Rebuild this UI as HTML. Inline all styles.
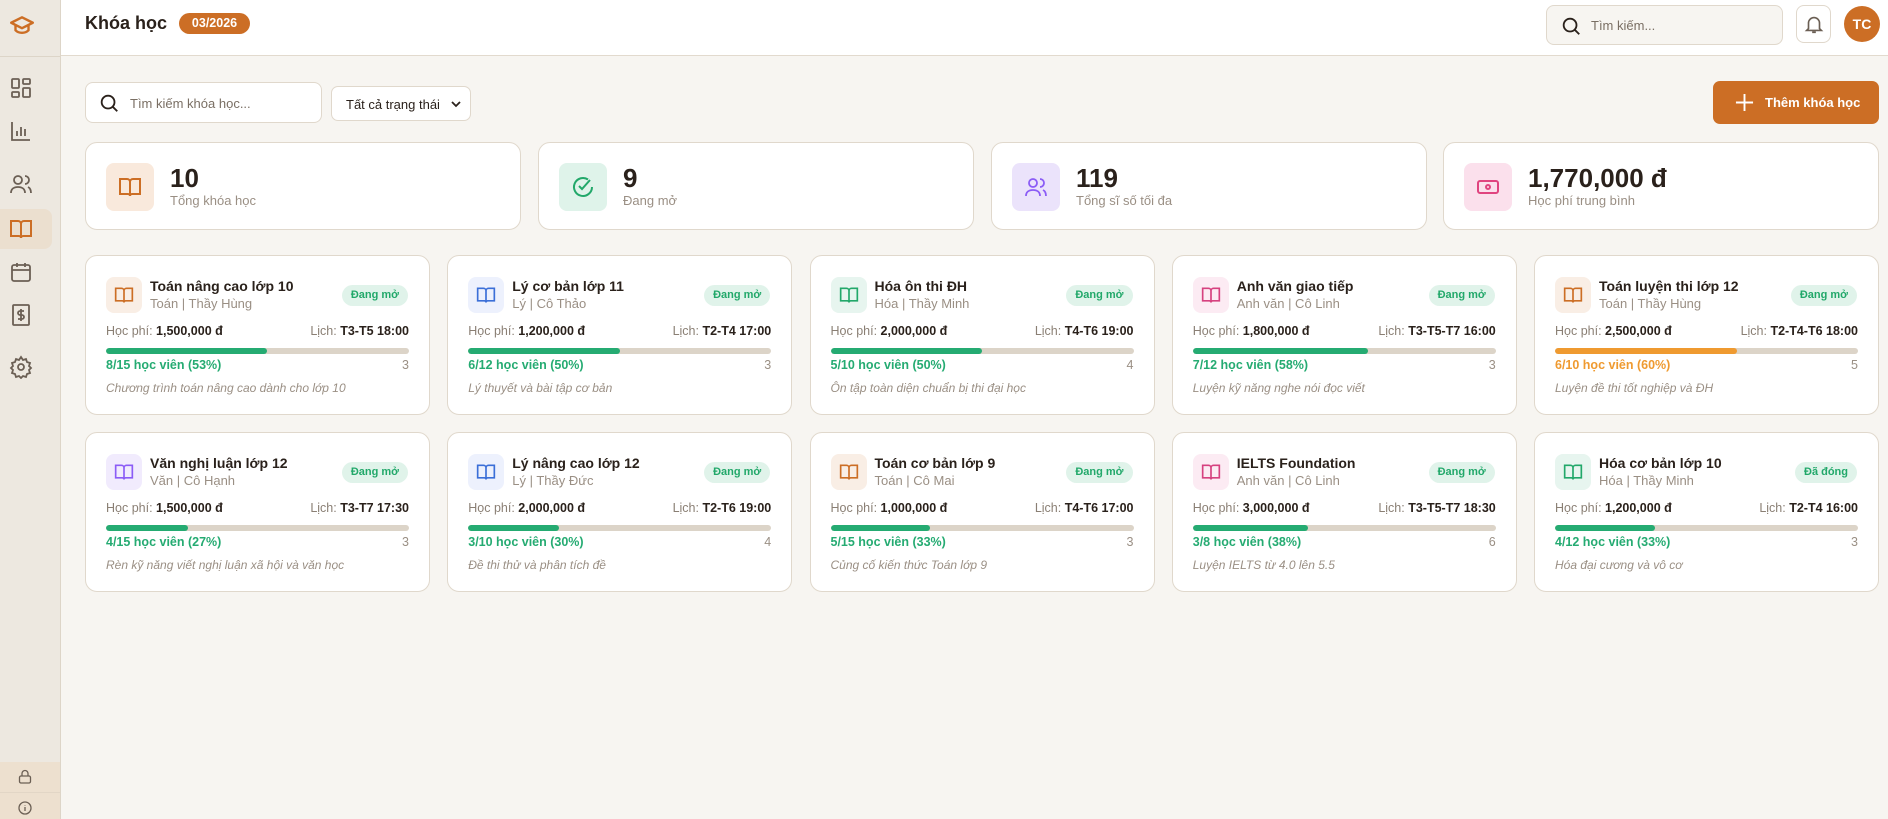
<!DOCTYPE html>
<html><head><meta charset="utf-8"><style>
*{box-sizing:border-box;margin:0;padding:0}
body{width:1888px;height:819px;overflow:hidden;background:#f7f5f1;font-family:"Liberation Sans",Arial,sans-serif;color:#2a211b;position:relative}
.sb{position:absolute;left:0;top:0;width:61px;height:819px;background:#ede8e0;border-right:1px solid #ddd5c8}
.sb .ic{position:absolute;left:9px;width:24px;height:24px}
.hd{position:absolute;left:61px;top:0;right:0;height:56px;background:#fff;border-bottom:1px solid #e2dace}
.abs{position:absolute}
.card{position:absolute;width:345px;height:160px;background:#fff;border:1px solid #e0d8cc;border-radius:12px}
.card .ib{position:absolute;left:20px;top:21px;width:36px;height:36px;border-radius:8px;display:flex;align-items:center;justify-content:center}
.card .t{position:absolute;left:64px;top:22px;font-size:14px;font-weight:bold;color:#2a211b}
.card .s{position:absolute;left:64px;top:40px;font-size:13px;color:#9a8f84}
.card .bd{position:absolute;right:21px;top:29px;height:21px;padding:0 9px;border-radius:11px;background:#e0f3ea;color:#22a86a;font-size:11px;font-weight:bold;line-height:21px}
.card .fee{position:absolute;left:20px;right:20px;top:68px;font-size:12.5px;color:#8a7f74;display:flex;justify-content:space-between}
.card .fee b{color:#2a211b}
.card .bar{position:absolute;left:20px;right:20px;top:92px;height:6px;border-radius:3px;background:#dcd4c8;overflow:hidden}
.card .bar i{display:block;height:100%;background:#25ab72;border-radius:3px}
.card .cnt{position:absolute;left:20px;right:20px;top:102px;font-size:12.5px;display:flex;justify-content:space-between;color:#9a8f84}
.card .cnt span:first-child{color:#25ab72;font-weight:bold}
.card .d{position:absolute;left:20px;top:125px;font-size:12px;font-style:italic;color:#9a8f84}
.stat{position:absolute;top:142px;width:436px;height:88px;background:#fff;border:1px solid #e0d8cc;border-radius:12px}
.stat .ib{position:absolute;left:20px;top:20px;width:48px;height:48px;border-radius:8px;display:flex;align-items:center;justify-content:center}
.stat .n{position:absolute;left:84px;top:20px;font-size:26px;font-weight:bold}
.stat .l{position:absolute;left:84px;top:50px;font-size:13px;color:#9a8f84}
</style></head><body>
<div class="sb">
<svg class="abs" style="left:7px;top:13px" width="30" height="26" viewBox="0 0 24 24" fill="none" stroke="#cc6e25" stroke-width="2.2" stroke-linejoin="round"><path d="M2 9l10-5 10 5-10 5z"/><path d="M6 11v5c3 3 9 3 12 0v-5"/></svg>
<div class="abs" style="left:0;top:56px;width:60px;height:1px;background:#ddd5c8"></div>
<svg class="ic" style="top:76px" viewBox="0 0 24 24" fill="none" stroke="#6b5f54" stroke-width="1.8"><rect x="3" y="3" width="7" height="9" rx="1"/><rect x="14" y="3" width="7" height="5" rx="1"/><rect x="14" y="12" width="7" height="9" rx="1"/><rect x="3" y="16" width="7" height="5" rx="1"/></svg>
<svg class="ic" style="top:119px" viewBox="0 0 24 24" fill="none" stroke="#6b5f54" stroke-width="1.8"><path d="M3 3v18h18M8 17v-5M12 17V8M16 17v-7"/></svg>
<svg class="ic" style="top:172px" viewBox="0 0 24 24" fill="none" stroke="#6b5f54" stroke-width="1.8"><circle cx="9" cy="8" r="4"/><path d="M2 21c0-4 3-6 7-6s7 2 7 6M16 4a4 4 0 010 8M19 15c2 1 3 3 3 6"/></svg>
<div class="abs" style="left:0;top:209px;width:52px;height:40px;background:#ebdfcf;border-radius:0 8px 8px 0"></div>
<svg class="ic" style="top:217px" viewBox="0 0 24 24" fill="none" stroke="#cc6e25" stroke-width="2"><path d="M2 4h7a3 3 0 013 3v14a2 2 0 00-2-2H2zM22 4h-7a3 3 0 00-3 3v14a2 2 0 012-2h8z"/></svg>
<svg class="ic" style="top:260px" viewBox="0 0 24 24" fill="none" stroke="#6b5f54" stroke-width="1.8"><rect x="3" y="5" width="18" height="16" rx="2"/><path d="M3 10h18M8 3v4M16 3v4"/></svg>
<svg class="ic" style="top:303px" viewBox="0 0 24 24" fill="none" stroke="#6b5f54" stroke-width="1.8"><rect x="4" y="2" width="16" height="20" rx="1"/><path d="M15 8h-4a2 2 0 000 4h2a2 2 0 010 4H9M12 6v12"/></svg>
<svg class="ic" style="top:355px" viewBox="0 0 24 24" fill="none" stroke="#6b5f54" stroke-width="1.8"><circle cx="12" cy="12" r="3"/><path d="M12 2l2 3 3-1 1 3 3 1-1 3 2 2-2 2 1 3-3 1-1 3-3-1-2 2-2-2-3 1-1-3-3-1 1-3-2-2 2-2-1-3 3-1 1-3 3 1z"/></svg>
<div class="abs" style="left:0;top:762px;width:60px;height:57px;background:#ede0cf"></div>
<div class="abs" style="left:0;top:792px;width:60px;height:1px;background:#e2d6c6"></div>
<svg class="abs" style="left:18px;top:769px" width="14" height="15" viewBox="0 0 14 15" fill="none" stroke="#6b5f54" stroke-width="1.3"><rect x="1.5" y="7" width="11" height="7" rx="1.5"/><path d="M4 7V4.5a3 3 0 016 0V7"/></svg>
<svg class="abs" style="left:18px;top:801px" width="14" height="14" viewBox="0 0 14 14" fill="none" stroke="#6b5f54" stroke-width="1.3"><circle cx="7" cy="7" r="6"/><path d="M7 6v4M7 4v.5"/></svg>
</div>
<div class="hd">
<div class="abs" style="left:24px;top:13px;display:flex;align-items:center;gap:12px">
<span style="font-size:18px;font-weight:bold">Khóa học</span>
<span style="display:inline-block;width:71px;height:21px;border-radius:11px;background:#cc6e25;color:#fff;font-size:12.5px;font-weight:bold;text-align:center;line-height:21px">03/2026</span></div>
<div class="abs" style="left:1485px;top:5px;width:237px;height:40px;border:1px solid #e0d8cc;border-radius:8px;background:#f7f5f1">
<svg class="abs" style="left:13px;top:9px" width="22" height="22" viewBox="0 0 24 24" fill="none" stroke="#2a211b" stroke-width="2"><circle cx="11" cy="11" r="7"/><path d="M16 16l5 5"/></svg>
<div class="abs" style="left:44px;top:12px;font-size:13px;color:#7a6f64">Tìm kiếm...</div></div>
<div class="abs" style="left:1735px;top:5px;width:35px;height:38px;border:1px solid #e0d8cc;border-radius:8px;background:#fff">
<svg class="abs" style="left:6px;top:7px" width="22" height="22" viewBox="0 0 24 24" fill="none" stroke="#6b5f54" stroke-width="1.8"><path d="M6 17V11a6 6 0 0112 0v6l2 2H4zM10 21h4"/></svg></div>
<div class="abs" style="left:1783px;top:6px;width:36px;height:36px;border-radius:50%;background:#cc6e25;color:#fff;font-weight:bold;font-size:14px;text-align:center;line-height:36px">TC</div>
</div>
<div class="abs" style="left:85px;top:82px;width:237px;height:41px;border:1px solid #e0d8cc;border-radius:8px;background:#fff">
<svg class="abs" style="left:12px;top:9px" width="22" height="22" viewBox="0 0 24 24" fill="none" stroke="#2a211b" stroke-width="2"><circle cx="11" cy="11" r="7"/><path d="M16 16l5 5"/></svg>
<div class="abs" style="left:44px;top:13px;font-size:13px;color:#7a6f64">Tìm kiếm khóa học...</div></div>
<div class="abs" style="left:331px;top:86px;width:140px;height:35px;border:1px solid #e0d8cc;border-radius:7px;background:#fff">
<div class="abs" style="left:14px;top:10px;font-size:13px;color:#2a211b">Tất cả trạng thái</div>
<svg class="abs" style="left:119px;top:13px" width="10" height="8" viewBox="0 0 10 8" fill="none" stroke="#2a211b" stroke-width="1.8"><path d="M1 2l4 4 4-4"/></svg></div>
<div class="abs" style="left:1713px;top:81px;width:166px;height:43px;border-radius:7px;background:#cc6e25;color:#fff">
<svg class="abs" style="left:22px;top:12px" width="19" height="19" viewBox="0 0 20 20" stroke="#fff" stroke-width="2"><path d="M10 1v18M1 10h18"/></svg>
<div class="abs" style="left:52px;top:14px;font-size:13px;font-weight:bold">Thêm khóa học</div></div>

<div class="stat" style="left:85px"><div class="ib" style="background:#f9e9dc"><svg width="24" height="24" viewBox="0 0 24 24" fill="none" stroke="#cc6e25" stroke-width="2"><path d="M2 4h7a3 3 0 013 3v14a2 2 0 00-2-2H2zM22 4h-7a3 3 0 00-3 3v14a2 2 0 012-2h8z"/></svg></div><div class="n">10</div><div class="l">Tổng khóa học</div></div>
<div class="stat" style="left:538px"><div class="ib" style="background:#dff3ea"><svg width="24" height="24" viewBox="0 0 24 24" fill="none" stroke="#22a86a" stroke-width="2"><path d="M21 12a9 9 0 11-4-7.5"/><path d="M8 11l3 3 8-9"/></svg></div><div class="n">9</div><div class="l">Đang mở</div></div>
<div class="stat" style="left:991px"><div class="ib" style="background:#ebe3fb"><svg width="24" height="24" viewBox="0 0 24 24" fill="none" stroke="#8b5cf6" stroke-width="1.8"><circle cx="9" cy="8" r="4"/><path d="M2 21c0-4 3-6 7-6s7 2 7 6M16 4a4 4 0 010 8M19 15c2 1 3 3 3 6"/></svg></div><div class="n">119</div><div class="l">Tổng sĩ số tối đa</div></div>
<div class="stat" style="left:1443px"><div class="ib" style="background:#fbe0ec"><svg width="24" height="24" viewBox="0 0 24 24" fill="none" stroke="#e0447f" stroke-width="2"><rect x="2" y="6" width="20" height="12" rx="2"/><circle cx="12" cy="12" r="2"/><path d="M6 12h.01M18 12h.01"/></svg></div><div class="n">1,770,000 đ</div><div class="l">Học phí trung bình</div></div>

<div id="cards"></div>
<script>
var C={o:['#f9eee5','#cc6e25'],b:['#edf1fd','#3b6fd8'],g:['#e7f5ef','#22a86a'],p:['#fcebf3','#d6417f'],v:['#f1ebfd','#8b5cf6']};
var D=[
['o','Toán nâng cao lớp 10','Toán | Thầy Hùng','Đang mở','1,500,000 đ','T3-T5 18:00',53,'8/15 học viên (53%)','3','Chương trình toán nâng cao dành cho lớp 10'],
['b','Lý cơ bản lớp 11','Lý | Cô Thảo','Đang mở','1,200,000 đ','T2-T4 17:00',50,'6/12 học viên (50%)','3','Lý thuyết và bài tập cơ bản'],
['g','Hóa ôn thi ĐH','Hóa | Thầy Minh','Đang mở','2,000,000 đ','T4-T6 19:00',50,'5/10 học viên (50%)','4','Ôn tập toàn diện chuẩn bị thi đại học'],
['p','Anh văn giao tiếp','Anh văn | Cô Linh','Đang mở','1,800,000 đ','T3-T5-T7 16:00',58,'7/12 học viên (58%)','3','Luyện kỹ năng nghe nói đọc viết'],
['o','Toán luyện thi lớp 12','Toán | Thầy Hùng','Đang mở','2,500,000 đ','T2-T4-T6 18:00',60,'6/10 học viên (60%)','5','Luyện đề thi tốt nghiệp và ĐH',1],
['v','Văn nghị luận lớp 12','Văn | Cô Hạnh','Đang mở','1,500,000 đ','T3-T7 17:30',27,'4/15 học viên (27%)','3','Rèn kỹ năng viết nghị luận xã hội và văn học'],
['b','Lý nâng cao lớp 12','Lý | Thầy Đức','Đang mở','2,000,000 đ','T2-T6 19:00',30,'3/10 học viên (30%)','4','Đề thi thử và phân tích đề'],
['o','Toán cơ bản lớp 9','Toán | Cô Mai','Đang mở','1,000,000 đ','T4-T6 17:00',33,'5/15 học viên (33%)','3','Củng cố kiến thức Toán lớp 9'],
['p','IELTS Foundation','Anh văn | Cô Linh','Đang mở','3,000,000 đ','T3-T5-T7 18:30',38,'3/8 học viên (38%)','6','Luyện IELTS từ 4.0 lên 5.5'],
['g','Hóa cơ bản lớp 10','Hóa | Thầy Minh','Đã đóng','1,200,000 đ','T2-T4 16:00',33,'4/12 học viên (33%)','3','Hóa đại cương và vô cơ']];
var h='';
D.forEach(function(d,i){var x=85+(i%5)*362.25,y=i<5?255:432,c=C[d[0]],or=d[10];
h+='<div class="card" style="left:'+x+'px;top:'+y+'px"><div class="ib" style="background:'+c[0]+'"><svg width="20" height="20" viewBox="0 0 24 24" fill="none" stroke="'+c[1]+'" stroke-width="2"><path d="M2 4h7a3 3 0 013 3v14a2 2 0 00-2-2H2zM22 4h-7a3 3 0 00-3 3v14a2 2 0 012-2h8z"/></svg></div><div class="t">'+d[1]+'</div><div class="s">'+d[2]+'</div><div class="bd">'+d[3]+'</div><div class="fee"><span>Học phí: <b>'+d[4]+'</b></span><span>Lịch: <b>'+d[5]+'</b></span></div><div class="bar"><i style="width:'+d[6]+'%'+(or?';background:#ef9a30':'')+'"></i></div><div class="cnt"><span'+(or?' style="color:#ef9a30"':'')+'>'+d[7]+'</span><span>'+d[8]+'</span></div><div class="d">'+d[9]+'</div></div>';});
document.getElementById('cards').innerHTML=h;
</script>
</body></html>
